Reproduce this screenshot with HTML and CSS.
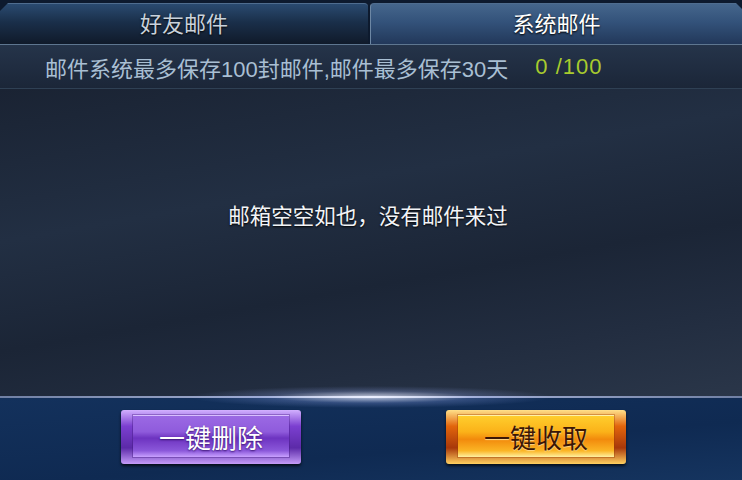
FILE: index.html
```html
<!DOCTYPE html>
<html>
  <head>
    <title>邮件</title>
    <meta charset="utf-8">
    <link rel="stylesheet" href="styles.css">
  </head>
  <body>
    <div class="mailbox">
      <div class="tabs">
        <div class="tab">好友邮件</div>
        <div class="tab active">系统邮件</div>
      </div>

      <div class="info">
        <span class="note">邮件系统最多保存100封邮件,邮件最多保存30天</span>
        <span class="count">0 /100</span>
      </div>

      <div class="list">
        <p class="empty">邮箱空空如也，没有邮件来过</p>
      </div>

      <div class="glow"></div>

      <div class="actions">
        <div class="btn purple"><span class="face">一键删除</span></div>
        <div class="btn orange"><span class="face">一键收取</span></div>
      </div>
    </div>
  </body>
</html>
```

FILE: styles.css
```css
body, html {
  margin: 0;
  padding: 0;
}
body {
  width: 742px;
  height: 480px;
  overflow: hidden;
  background: #10284d;
  font-family: "Noto Sans CJK SC", "Liberation Sans", sans-serif;
}
.mailbox {
  display: flex;
  flex-direction: column;
  height: 480px;
}
.tabs {
  display: flex;
  gap: 2px;
  padding-top: 3px;
  background: #0d1a2e;
  height: 41px;
}
.tab {
  flex: 0 0 368px;
  display: flex;
  align-items: center;
  justify-content: center;
  padding-bottom: 5px;
  box-sizing: border-box;
  font-size: 22px;
  color: #c9d2dc;
  text-shadow: 0 1px 2px #000;
  border-radius: 4px 4px 0 0;
  border-top: 1px solid #4f6d8f;
  background: linear-gradient(#2a4a70, #1a2f4a 45%, #101a2a);
  clip-path: polygon(8px 0, 100% 0, 100% 100%, 0 100%, 0 8px);
}
.tab.active {
  flex: 1;
  color: #ffffff;
  border-left: 1px solid #6d87a4;
  background: linear-gradient(#45668c, #33527a 45%, #22385a);
  clip-path: polygon(0 0, calc(100% - 6px) 0, 100% 6px, 100% 100%, 0 100%);
}
.info {
  height: 43px;
  display: flex;
  align-items: center;
  gap: 27px;
  padding-left: 45px;
  border-top: 1px solid #5e7690;
  border-bottom: 1px solid #2f4054;
  background: linear-gradient(#25344a, #1b2638);
  font-family: "Liberation Sans", "Noto Sans CJK SC", sans-serif;
  font-size: 22px;
}
.note {
  color: #a9bfd3;
}
.count {
  color: #a8cb2e;
  letter-spacing: 1px;
}
.list {
  flex: 1;
  display: flex;
  align-items: center;
  justify-content: center;
  background: linear-gradient(170deg, #1a2333, #222f43 35%, #1b2536 60%, #222d40 80%, #2a3649);
}
.empty {
  margin: 0 6px 56px 0;
  font-size: 21.5px;
  color: #f2f4f7;
  text-shadow: 0 1px 2px #000;
}
.glow {
  position: relative;
  height: 2px;
  background: linear-gradient(90deg, #7080a4, #a0acd0 35%, #ffffff 50%, #a0acd0 65%, #7080a4);
}
.glow::before {
  content: "";
  position: absolute;
  left: 190px;
  right: 190px;
  top: -10px;
  height: 22px;
  background: radial-gradient(ellipse closest-side, rgba(230, 235, 255, 0.8), rgba(150, 170, 240, 0.25) 55%, transparent);
}
.actions {
  height: 82px;
  display: flex;
  align-items: flex-start;
  padding-top: 12px;
  box-sizing: border-box;
  background: linear-gradient(175deg, #13315c, #0f2a52 60%, #15345f);
}
.btn {
  width: 180px;
  height: 54px;
  box-sizing: border-box;
  padding: 5px 12px 7px;
  border-radius: 3px;
  box-shadow: 0 2px 3px rgba(0, 0, 0, 0.7);
}
.btn.purple {
  margin-left: 121px;
  background: linear-gradient(#d2b0ff, #7b3fd0 30%, #5c2aa8 70%, #c49cf8);
}
.btn.orange {
  margin-left: 145px;
  background: linear-gradient(#ffe08a, #e2650c 30%, #a8380a 70%, #ffd060);
}
.face {
  display: flex;
  align-items: center;
  justify-content: center;
  height: 100%;
  font-size: 26px;
}
.purple .face {
  color: #ffffff;
  text-shadow: 0 1px 2px #3a1470;
  background: linear-gradient(#9c6ae4, #8f5bdc 40%, #6d33c0 55%, #8b58da 85%, #c8a0ff);
  box-shadow: inset 0 1px 0 #d8bfff, 0 0 0 1px rgba(60, 20, 120, 0.35);
}
.orange .face {
  color: #3b1605;
  text-shadow: 0 1px 1px #ffd98a;
  background: linear-gradient(#ffcf2e, #fbb219 40%, #f28a0c 58%, #fbb525 85%, #fff0a0);
  box-shadow: inset 0 1px 0 #fff1a8, 0 0 0 1px rgba(150, 60, 0, 0.35);
}
```
